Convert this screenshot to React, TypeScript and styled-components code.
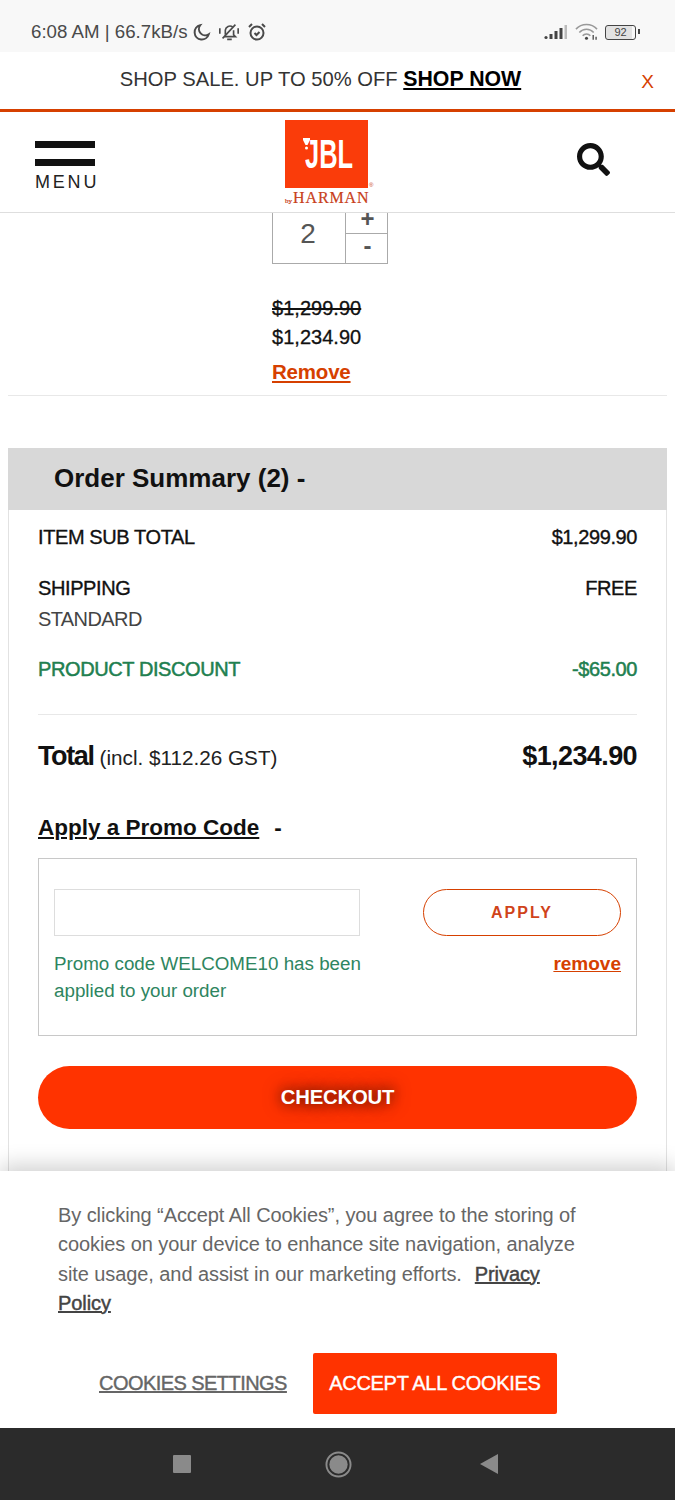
import * as React from 'react';
import styled, { createGlobalStyle } from 'styled-components';
import { FaSearch } from 'react-icons/fa';

const orange = '#ff3300';
const rust = '#d64000';
const green = '#1f8050';

const GlobalStyle = createGlobalStyle`
  html, body {
    margin: 0;
    padding: 0;
    background: #fff;
  }
  body {
    font-family: "Liberation Sans", Arial, sans-serif;
    color: #111;
  }
`;

const Screen = styled.div`
  width: 675px;
  height: 1500px;
  display: flex;
  flex-direction: column;
  overflow: hidden;
  position: relative;
  background: #fff;
`;

const StatusBar = styled.div`
  height: 52px;
  flex: none;
  box-sizing: border-box;
  padding: 12px 39px 0 31px;
  background: #f8f8f8;
  display: flex;
  align-items: center;
  justify-content: space-between;
  color: #4a4a4a;
  font-size: 18.7px;
`;

const StatusGroup = styled.div`
  display: flex;
  align-items: center;
  gap: 7px;
`;

const StatusText = styled.span`
  margin-right: -2px;
`;

const Promo = styled.div`
  height: 60px;
  flex: none;
  border-bottom: 3px solid ${rust};
  box-sizing: border-box;
  position: relative;
  display: flex;
  align-items: center;
  justify-content: center;
  padding: 0 34px 3px 0;
  font-size: 20.2px;
  color: #333;
  white-space: pre;
`;

const PromoLink = styled.a`
  font-weight: 700;
  font-size: 21.3px;
  color: #000;
  text-decoration: underline;
`;

const PromoClose = styled.span`
  position: absolute;
  right: 21px;
  top: 19px;
  font-size: 19px;
  color: ${rust};
`;

const Header = styled.header`
  height: 101px;
  flex: none;
  box-sizing: border-box;
  border-bottom: 1px solid #dedede;
  padding: 8px 0 0 35px;
  display: grid;
  grid-template-columns: 250px 292px 1fr;
  align-items: start;
  background: #fff;
`;

const MenuButton = styled.div`
  margin-top: 21px;
  display: flex;
  flex-direction: column;
  gap: 11px;
`;

const MenuBar = styled.span`
  display: block;
  width: 60px;
  height: 7px;
  background: #111;
`;

const MenuLabel = styled.span`
  font-size: 18px;
  letter-spacing: 2.8px;
  line-height: 14px;
  margin-top: -2px;
  color: #222;
`;

const Logo = styled.div`
  position: relative;
  width: 92px;
  display: flex;
  flex-direction: column;
`;

const LogoSquare = styled.div`
  position: relative;
  width: 83px;
  height: 68px;
  background: #fa3c0a;
  overflow: hidden;
`;

const LogoText = styled.span`
  position: absolute;
  left: 20px;
  top: 14px;
  color: #fff;
  font-weight: 700;
  font-size: 41px;
  line-height: 41px;
  transform: scaleX(0.62);
  transform-origin: left top;
`;

const LogoMark = styled.svg`
  position: absolute;
  left: 18px;
  top: 18px;
`;

const LogoByline = styled.div`
  font-family: "Liberation Serif", serif;
  font-size: 16px;
  line-height: 18px;
  margin-top: 1px;
  color: #c8401a;
  letter-spacing: 0.9px;
  white-space: nowrap;
  -webkit-text-stroke: 0.2px currentColor;
`;

const LogoBy = styled.span`
  font-size: 7px;
  letter-spacing: 0;
  margin-right: 1px;
`;

const LogoReg = styled.span`
  position: absolute;
  left: 84px;
  top: 62px;
  font-size: 6px;
  line-height: 6px;
  color: #c8401a;
`;

const SearchButton = styled.div`
  margin-top: 23px;
  display: flex;
  color: #111;
`;

const Content = styled.main`
  flex: 1;
  min-height: 0;
  overflow: hidden;
  padding: 0 8px;
`;

const ProductRow = styled.section`
  height: 183px;
  box-sizing: border-box;
  border-bottom: 1px solid #e8e8e8;
  padding-left: 264px;
  display: flex;
  flex-direction: column;
`;

const Stepper = styled.div`
  width: 116px;
  height: 51px;
  flex: none;
  box-sizing: border-box;
  border: 1px solid #aaa;
  border-top: 0;
  display: grid;
  grid-template-columns: 73px 1fr;
  grid-template-rows: 21px 1fr;
`;

const StepperValue = styled.div`
  grid-row: 1 / 3;
  border-right: 1px solid #aaa;
  padding: 0 2px 9px 0;
  display: flex;
  align-items: center;
  justify-content: center;
  font-size: 28px;
  color: #555;
`;

const StepperButton = styled.div<{ $top?: boolean }>`
  display: flex;
  align-items: center;
  justify-content: center;
  font-size: 24px;
  font-weight: 700;
  line-height: 12px;
  color: #555;
  padding-left: 2px;
  padding-bottom: ${p => (p.$top ? 8 : 5)}px;
  ${p => p.$top && 'border-bottom: 1px solid #aaa;'}
`;

const Price = styled.div<{ $old?: boolean }>`
  font-size: 20px;
  line-height: 29px;
  color: #111;
  letter-spacing: 0.03px;
  -webkit-text-stroke: 0.3px currentColor;
  ${p => p.$old && 'text-decoration: line-through; margin-top: 30px;'}
`;

const RemoveLink = styled.a`
  font-size: 20.5px;
  font-weight: 700;
  color: ${rust};
  text-decoration: underline;
  margin-top: 8px;
  letter-spacing: -0.2px;
`;

const Summary = styled.section`
  margin-top: 52px;
  border-left: 1px solid #e2e2e2;
  border-right: 1px solid #e2e2e2;
`;

const SummaryTitle = styled.h2`
  margin: 0 -1px;
  height: 62px;
  box-sizing: border-box;
  padding: 0 0 2px 46px;
  background: #d8d8d8;
  display: flex;
  align-items: center;
  font-size: 26px;
  font-weight: 700;
  color: #111;
`;

const SummaryBody = styled.div`
  padding: 0 29px 60px;
`;

const Line = styled.div<{ $green?: boolean }>`
  display: flex;
  justify-content: space-between;
  font-size: 20px;
  letter-spacing: -0.4px;
  line-height: 26px;
  color: ${p => (p.$green ? green : '#111')};
  -webkit-text-stroke: ${p => (p.$green ? 0.5 : 0.35)}px currentColor;
`;

const SubLine = styled.div`
  margin-top: 5px;
  font-size: 20px;
  line-height: 26px;
  color: #444;
  letter-spacing: -0.6px;
`;

const LineGroup = styled.div<{ $top: number }>`
  padding-top: ${p => p.$top}px;
`;

const Divider = styled.hr`
  border: 0;
  border-top: 1px solid #e8e8e8;
  margin: 32px 0 0;
`;

const TotalRow = styled.div`
  margin-top: 26px;
  display: flex;
  justify-content: space-between;
  align-items: baseline;
`;

const TotalLabel = styled.div`
  font-size: 27px;
  font-weight: 700;
  letter-spacing: -1.4px;
`;

const TotalNote = styled.span`
  font-size: 20.7px;
  font-weight: 400;
  letter-spacing: 0;
  color: #222;
`;

const TotalAmount = styled.div`
  font-size: 27px;
  font-weight: 700;
  letter-spacing: -0.6px;
`;

const PromoHeading = styled.div`
  margin-top: 42px;
  font-size: 22.5px;
  font-weight: 700;
  line-height: 28px;
  display: flex;
  gap: 15px;
`;

const PromoHeadingLink = styled.a`
  text-decoration: underline;
  color: #111;
`;

const PromoBox = styled.div`
  margin-top: 16px;
  height: 178px;
  box-sizing: border-box;
  border: 1px solid #c8c8c8;
  padding: 30px 15px 0;
  display: grid;
  grid-template-columns: 306px 1fr;
  grid-template-rows: 47px 1fr;
  row-gap: 14px;
`;

const PromoInput = styled.input`
  box-sizing: border-box;
  width: 306px;
  height: 47px;
  border: 1px solid #ddd;
  background: #fff;
`;

const ApplyButton = styled.button`
  justify-self: end;
  width: 198px;
  height: 47px;
  border: 1px solid ${rust};
  border-radius: 24px;
  background: #fff;
  color: #d0431a;
  font-family: inherit;
  font-size: 16px;
  font-weight: 700;
  letter-spacing: 2px;
`;

const PromoMessage = styled.div`
  font-size: 18.8px;
  line-height: 27px;
  color: #2e8560;
  white-space: pre;
`;

const PromoRemove = styled.a`
  justify-self: end;
  align-self: start;
  font-size: 19px;
  font-weight: 700;
  line-height: 27px;
  color: ${rust};
  text-decoration: underline;
`;

const CheckoutButton = styled.button`
  display: block;
  width: 100%;
  height: 63px;
  margin-top: 30px;
  border: 0;
  border-radius: 32px;
  background: ${orange};
  color: #fff;
  font-family: inherit;
  font-size: 20.3px;
  font-weight: 700;
  letter-spacing: -0.2px;
  text-shadow: 0 0 12px rgba(90, 20, 0, 0.95), 0 0 18px rgba(90, 20, 0, 0.7);
`;

const CookieBanner = styled.aside`
  position: absolute;
  left: 0;
  right: 0;
  top: 1171px;
  height: 257px;
  box-sizing: border-box;
  background: #fff;
  box-shadow: 0 -6px 20px rgba(0, 0, 0, 0.18);
  padding: 30px 87px 0 58px;
`;

const CookieText = styled.p`
  margin: 0;
  font-size: 20px;
  line-height: 29.3px;
  letter-spacing: -0.08px;
  color: #666;
`;

const CookieLink = styled.a`
  color: #444;
  text-decoration: underline;
  margin-left: 13px;
  -webkit-text-stroke: 0.45px currentColor;
`;

const CookieActions = styled.div`
  margin-top: 35px;
  padding-left: 41px;
  display: flex;
  align-items: center;
  gap: 26px;
`;

const CookieSettings = styled.a`
  font-size: 20px;
  font-weight: 400;
  letter-spacing: -0.55px;
  color: #666;
  text-decoration: underline;
  -webkit-text-stroke: 0.4px currentColor;
  white-space: nowrap;
`;

const AcceptButton = styled.button`
  flex: none;
  width: 244px;
  height: 61px;
  border: 0;
  border-radius: 2px;
  background: ${orange};
  color: #fff;
  font-family: inherit;
  font-size: 20px;
  letter-spacing: -0.3px;
  -webkit-text-stroke: 0.4px currentColor;
`;

const NavBar = styled.nav`
  position: absolute;
  left: 0;
  right: 0;
  bottom: 0;
  height: 72px;
  box-sizing: border-box;
  padding-left: 173px;
  background: #2b2b2b;
  display: flex;
  align-items: center;
  gap: 128px;
  & > svg:first-child {
    margin-right: 6px;
  }
`;

const Battery = styled.span`
  width: 31px;
  height: 15px;
  box-sizing: border-box;
  border: 1.5px solid #444;
  border-radius: 3px;
  font-size: 11px;
  line-height: 12px;
  text-align: center;
  color: #444;
  background: linear-gradient(90deg, #e2e2e2 90%, transparent 90%);
  position: relative;
  &::after {
    content: '';
    position: absolute;
    right: -5px;
    top: 3.5px;
    width: 2px;
    height: 5px;
    background: #444;
  }
`;

const MoonIcon = () => (
  <svg width="18" height="18" viewBox="0 0 20 20" fill="none" stroke="#4a4a4a" strokeWidth="2.2">
    <path d="M8 2.5a8 8 0 1 0 9.5 10 7 7 0 0 1-9.5-10z" />
  </svg>
);

const MutedBellIcon = () => (
  <svg width="22" height="20" viewBox="0 0 24 20" fill="none" stroke="#4a4a4a" strokeWidth="1.8">
    <path d="M8 13V8a5 5 0 0 1 8-3.5M17 8v5l2 2H7" />
    <path d="M5 17 19 2" />
    <path d="M10 18h5M2 6v6M22 6v6" />
  </svg>
);

const AlarmIcon = () => (
  <svg width="20" height="20" viewBox="0 0 20 20" fill="none" stroke="#4a4a4a" strokeWidth="2">
    <circle cx="10" cy="11" r="6.5" />
    <path d="M7.5 11l2 2 3-3M2 5l3-3M18 5l-3-3" />
  </svg>
);

const SignalIcon = () => (
  <svg width="24" height="16" viewBox="0 0 24 16">
    <circle cx="2" cy="13.5" r="1.6" fill="#444" />
    <rect x="5.5" y="10" width="3" height="5" fill="#444" />
    <rect x="10.5" y="7" width="3" height="8" fill="#444" />
    <rect x="15.5" y="4" width="3" height="11" fill="#444" />
    <rect x="20.5" y="1" width="2.5" height="14" fill="#bbb" />
  </svg>
);

const WifiIcon = () => (
  <svg width="23" height="18" viewBox="0 0 24 18" fill="none" stroke="#999" strokeWidth="1.6">
    <path d="M1 6a15 15 0 0 1 22 0M4.5 9.5a10 10 0 0 1 15 0M8 13a5 5 0 0 1 8 0" />
    <circle cx="12" cy="15.5" r="1.6" fill="#444" stroke="none" />
    <path d="M19 12v5M22 14v3" stroke="#555" strokeWidth="1.5" />
  </svg>
);

const NavIcons = () => (
  <>
    <svg width="18" height="18" viewBox="0 0 18 18">
      <rect width="18" height="18" rx="1" fill="#8a8a8a" />
    </svg>
    <svg width="27" height="27" viewBox="0 0 28 28">
      <circle cx="14" cy="14" r="12.5" fill="none" stroke="#8a8a8a" strokeWidth="2" />
      <circle cx="14" cy="14" r="9.5" fill="#8a8a8a" />
    </svg>
    <svg width="18" height="20" viewBox="0 0 18 20">
      <path d="M18 0v20L0 10z" fill="#8a8a8a" />
    </svg>
  </>
);

export default function App() {
  return (
    <Screen>
      <GlobalStyle />
      <StatusBar>
        <StatusGroup>
          <StatusText>6:08 AM | 66.7kB/s</StatusText>
          <MoonIcon />
          <MutedBellIcon />
          <AlarmIcon />
        </StatusGroup>
        <StatusGroup>
          <SignalIcon />
          <WifiIcon />
          <Battery>92</Battery>
        </StatusGroup>
      </StatusBar>

      <Promo>
        SHOP SALE. UP TO 50% OFF <PromoLink>SHOP NOW</PromoLink>
        <PromoClose>X</PromoClose>
      </Promo>

      <Header>
        <MenuButton>
          <MenuBar />
          <MenuBar />
          <MenuLabel>MENU</MenuLabel>
        </MenuButton>
        <Logo>
          <LogoSquare>
            <LogoText>JBL</LogoText>
            <LogoMark width="7" height="12" viewBox="0 0 7 12" fill="#fff">
              <path d="M0 0h7v2L4.5 7h-2L0 2z" />
              <circle cx="3.5" cy="10" r="1.5" />
            </LogoMark>
          </LogoSquare>
          <LogoByline>
            <LogoBy>by</LogoBy>HARMAN
          </LogoByline>
          <LogoReg>®</LogoReg>
        </Logo>
        <SearchButton>
          <FaSearch size={33} />
        </SearchButton>
      </Header>

      <Content>
        <ProductRow>
          <Stepper>
            <StepperValue>2</StepperValue>
            <StepperButton $top>+</StepperButton>
            <StepperButton>-</StepperButton>
          </Stepper>
          <Price $old>$1,299.90</Price>
          <Price>$1,234.90</Price>
          <RemoveLink>Remove</RemoveLink>
        </ProductRow>

        <Summary>
          <SummaryTitle>Order Summary (2) -</SummaryTitle>
          <SummaryBody>
            <LineGroup $top={14}>
              <Line>
                <span>ITEM SUB TOTAL</span>
                <span>$1,299.90</span>
              </Line>
            </LineGroup>
            <LineGroup $top={25}>
              <Line>
                <span>SHIPPING</span>
                <span>FREE</span>
              </Line>
              <SubLine>STANDARD</SubLine>
            </LineGroup>
            <LineGroup $top={24}>
              <Line $green>
                <span>PRODUCT DISCOUNT</span>
                <span>-$65.00</span>
              </Line>
            </LineGroup>
            <Divider />
            <TotalRow>
              <TotalLabel>
                Total <TotalNote>(incl. $112.26 GST)</TotalNote>
              </TotalLabel>
              <TotalAmount>$1,234.90</TotalAmount>
            </TotalRow>
            <PromoHeading>
              <PromoHeadingLink>Apply a Promo Code</PromoHeadingLink>
              <span>-</span>
            </PromoHeading>
            <PromoBox>
              <PromoInput />
              <ApplyButton>APPLY</ApplyButton>
              <PromoMessage>{'Promo code WELCOME10 has been\napplied to your order'}</PromoMessage>
              <PromoRemove>remove</PromoRemove>
            </PromoBox>
            <CheckoutButton>CHECKOUT</CheckoutButton>
          </SummaryBody>
        </Summary>
      </Content>

      <CookieBanner>
        <CookieText>
          By clicking “Accept All Cookies”, you agree to the storing of cookies on your device to enhance site
          navigation, analyze site usage, and assist in our marketing efforts.
          <CookieLink>Privacy Policy</CookieLink>
        </CookieText>
        <CookieActions>
          <CookieSettings>COOKIES SETTINGS</CookieSettings>
          <AcceptButton>ACCEPT ALL COOKIES</AcceptButton>
        </CookieActions>
      </CookieBanner>

      <NavBar>
        <NavIcons />
      </NavBar>
    </Screen>
  );
}
